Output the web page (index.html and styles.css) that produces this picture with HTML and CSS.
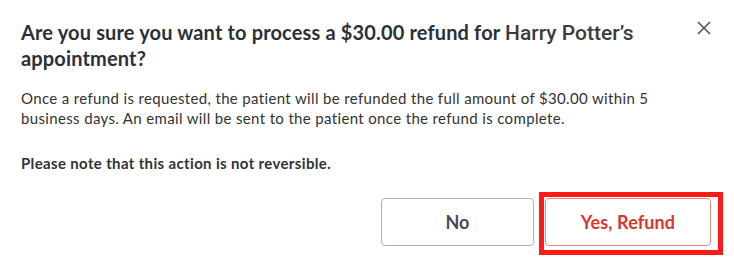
FILE: index.html
```html
<!DOCTYPE html>
<html>
<head>
    <title>Refund</title>
    <link rel="stylesheet" href="styles.css">
</head>
<body>
    <div class="modal">
        <div class="modal-header">
            <h2 class="modal-title">Are you sure you want to process a $30.00 refund for <span class="patient-name">Harry Potter’s</span> appointment?</h2>
            <button class="close-button" aria-label="Close">
                <svg width="14" height="14" viewBox="0 0 14 14">
                    <path d="M1 1 L13 13 M13 1 L1 13" stroke="#4f535b" stroke-width="1.6" fill="none"/>
                </svg>
            </button>
        </div>
        <p class="modal-text">Once a refund is requested, the patient will be refunded the full amount of $30.00 within 5 business days. An email will be sent to the patient once the refund is complete.</p>
        <p class="modal-note">Please note that this action is not reversible.</p>
        <div class="modal-actions">
            <button class="btn btn-cancel">No</button>
            <button class="btn btn-refund">Yes, Refund</button>
        </div>
        <div class="highlight"></div>
    </div>
</body>
</html>
```

FILE: styles.css
```css
* {
    margin: 0;
    padding: 0;
    box-sizing: border-box;
}

body {
    font-family: Lato, 'Open Sans', sans-serif;
    background: #fff;
    color: #333;
    letter-spacing: 0.35px;
}

.modal {
    position: relative;
    width: 734px;
    height: 266px;
    padding: 20px 23px 19px 21px;
    background: #fff;
}

.modal-header {
    display: flex;
    align-items: flex-start;
    justify-content: space-between;
    gap: 20px;
}

.modal-title {
    font-size: 20px;
    line-height: 25px;
    font-weight: 700;
    letter-spacing: 0.15px;
    color: #2b303b;
    max-width: 640px;
}

.patient-name {
    font-family: Roboto, 'Liberation Sans', sans-serif;
    font-weight: 500;
    font-size: 21px;
    letter-spacing: 0;
    color: #3c3c3c;
}

.close-button {
    background: none;
    border: none;
    width: 14px;
    height: 14px;
    margin-top: 1px;
    cursor: pointer;
    display: flex;
}

.modal-text {
    margin-top: 17px;
    font-size: 15px;
    line-height: 20px;
    color: #333;
    max-width: 650px;
}

.modal-note {
    margin-top: 25px;
    font-size: 15px;
    line-height: 20px;
    font-weight: 700;
    color: #333;
}

.modal-actions {
    margin-top: 25px;
    display: flex;
    justify-content: flex-end;
    gap: 11px;
}

.btn {
    font-family: Lato, sans-serif;
    font-size: 18px;
    font-weight: 700;
    letter-spacing: 0.1px;
    height: 48px;
    background: #fff;
    border-radius: 4px;
    cursor: pointer;
}

.btn-cancel {
    width: 153px;
    border: 1px solid #aeb1b8;
    color: #474c57;
}

.btn-refund {
    width: 166px;
    border: 1px solid #ea8a80;
    color: #d5382e;
}

/* annotation box around the refund button */
.highlight {
    position: absolute;
    left: 539px;
    top: 192px;
    width: 184px;
    height: 63px;
    border: 5px solid #ff1a1a;
    pointer-events: none;
}
```
